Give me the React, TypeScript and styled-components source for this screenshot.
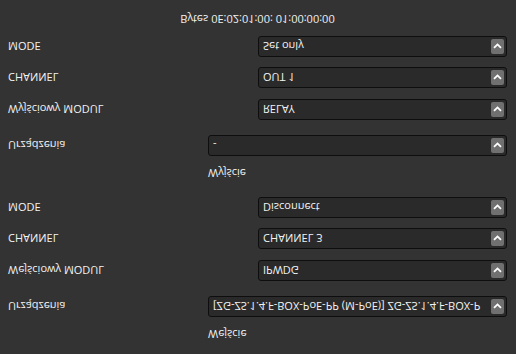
import React from 'react';
import styled, { createGlobalStyle } from 'styled-components';

const GlobalStyle = createGlobalStyle`
  html, body {
    margin: 0;
    padding: 0;
    background: #333333;
  }
  body {
    font-family: "Open Sans", "Noto Sans", sans-serif;
  }
`;

// the whole panel is shown mirrored top to bottom
const Screen = styled.div`
  width: 516px;
  height: 354px;
  overflow: hidden;
  box-sizing: border-box;
  padding: 6px 9px 0 8px;
  background: #333333;
  color: #f2f2f2;
  font-size: 11px;
  display: flex;
  flex-direction: column;
  transform: scaleY(-1);
`;

const Section = styled.div`
  display: flex;
  flex-direction: column;
`;

const SectionTitle = styled.div`
  height: 31px;
  padding-left: 200px;
  display: flex;
  align-items: flex-end;
  line-height: 15px;
  padding-bottom: 10px;
  box-sizing: border-box;
`;

const Row = styled.div<{ $after: number }>`
  display: flex;
  align-items: center;
  height: 21px;
  margin-bottom: ${(p) => p.$after}px;
`;

const Label = styled.div`
  flex: 1;
  white-space: nowrap;
`;

const SelectBox = styled.div<{ $width: number }>`
  width: ${(p) => p.$width}px;
  height: 21px;
  box-sizing: border-box;
  border: 1px solid #0e0e0e;
  border-radius: 3px;
  background: #2a2a2a;
  display: flex;
  align-items: center;
  padding: 0 2px 0 4px;
  gap: 4px;
`;

const Value = styled.div`
  flex: 1;
  overflow: hidden;
  white-space: nowrap;
`;

const ArrowButton = styled.div`
  width: 13px;
  height: 15px;
  border-radius: 2px;
  background: #707070;
  display: flex;
  align-items: center;
  justify-content: center;
  flex-shrink: 0;
`;

const Bytes = styled.div`
  margin-top: 9px;
  text-align: center;
  line-height: 15px;
`;

const Chevron = () => (
  <svg width="9" height="6" viewBox="0 0 9 6">
    <path d="M1 1.2 L4.5 4.6 L8 1.2" fill="none" stroke="#ffffff" strokeWidth="1.8" />
  </svg>
);

const Select = ({ value, width = 249 }: { value: string; width?: number }) => (
  <SelectBox $width={width}>
    <Value>{value}</Value>
    <ArrowButton>
      <Chevron />
    </ArrowButton>
  </SelectBox>
);

const rowsIn = [
  { label: 'Urządzenia', value: '[ZG-ZS.1.4.F-BOX-PoE-PP (M-PoE)] ZG-ZS.1.4.F-BOX-P', wide: true },
  { label: 'Wejściowy MODUL', value: 'IPWDG' },
  { label: 'CHANNEL', value: 'CHANNEL 3' },
  { label: 'MODE', value: 'Disconnect' },
];

const rowsOut = [
  { label: 'Urządzenia', value: '-', wide: true },
  { label: 'Wyjściowy MODUL', value: 'RELAY' },
  { label: 'CHANNEL', value: 'OUT 1' },
  { label: 'MODE', value: 'Set only' },
];

const gaps = [15, 11, 10, 10];

const Block = ({ title, rows, last }: { title: string; rows: typeof rowsIn; last?: boolean }) => (
  <Section>
    <SectionTitle>{title}</SectionTitle>
    {rows.map((r, i) => (
      <Row key={r.label} $after={last && i === rows.length - 1 ? 0 : gaps[i]}>
        <Label>{r.label}</Label>
        <Select value={r.value} width={r.wide ? 299 : 249} />
      </Row>
    ))}
  </Section>
);

export default function App() {
  return (
    <>
      <GlobalStyle />
      <Screen>
        <Block title="Wejście" rows={rowsIn} />
        <Block title="Wyjście" rows={rowsOut} last />
        <Bytes>Bytes 0E:02:01:00: 01:00:00:00</Bytes>
      </Screen>
    </>
  );
}
